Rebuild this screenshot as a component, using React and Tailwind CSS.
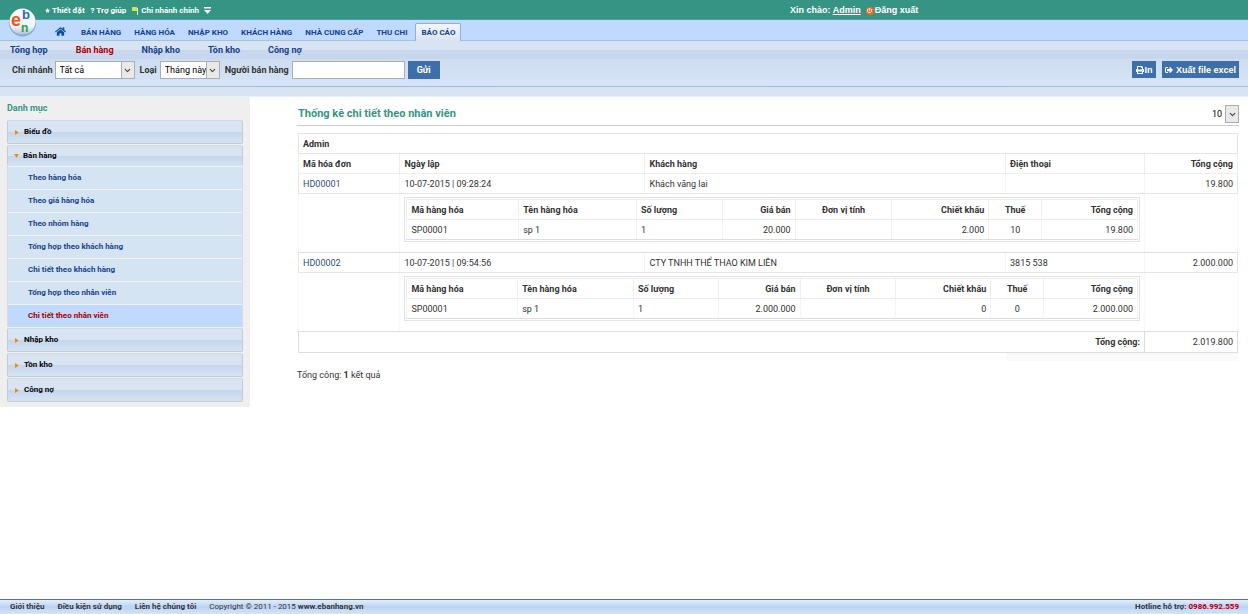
import React from 'react';
import { ChevronDown } from 'lucide-react';
import { FaHome, FaPrint, FaSignOutAlt, FaPowerOff } from 'react-icons/fa';

const mainNav = ['BÁN HÀNG', 'HÀNG HÓA', 'NHẬP KHO', 'KHÁCH HÀNG', 'NHÀ CUNG CẤP', 'THU CHI'];

const subNav = ['Tổng hợp', 'Bán hàng', 'Nhập kho', 'Tồn kho', 'Công nợ'];

const salesReports = [
  'Theo hàng hóa',
  'Theo giá hàng hóa',
  'Theo nhóm hàng',
  'Tổng hợp theo khách hàng',
  'Chi tiết theo khách hàng',
  'Tổng hợp theo nhân viên',
  'Chi tiết theo nhân viên',
];

const invoices = [
  {
    id: 'HD00001',
    date: '10-07-2015 | 09:28:24',
    customer: 'Khách vãng lai',
    phone: '',
    total: '19.800',
    cols: [112, 118, 86, 73, 97, 97, 53, 96],
    line: ['SP00001', 'sp 1', '1', '20.000', '', '2.000', '10', '19.800'],
  },
  {
    id: 'HD00002',
    date: '10-07-2015 | 09:54:56',
    customer: 'CTY TNHH THỂ THAO KIM LIÊN',
    phone: '3815 538',
    total: '2.000.000',
    cols: [111, 116, 85, 82, 96, 95, 53, 94],
    line: ['SP00001', 'sp 1', '1', '2.000.000', '', '0', '0', '2.000.000'],
  },
];

const lineHeads = [
  { label: 'Mã hàng hóa', align: 'text-left' },
  { label: 'Tên hàng hóa', align: 'text-left' },
  { label: 'Số lượng', align: 'text-left' },
  { label: 'Giá bán', align: 'text-right' },
  { label: 'Đơn vị tính', align: 'text-center' },
  { label: 'Chiết khấu', align: 'text-right' },
  { label: 'Thuế', align: 'text-center' },
  { label: 'Tổng cộng', align: 'text-right' },
];

const Logo = () => (
  <svg viewBox="0 0 30 30" className="h-[30px] w-[30px]">
    <defs>
      <linearGradient id="ball" x1="0" y1="0" x2="0" y2="1">
        <stop offset="0" stopColor="#ffffff" />
        <stop offset="0.7" stopColor="#eef4fa" />
        <stop offset="1" stopColor="#a9c0da" />
      </linearGradient>
    </defs>
    <circle cx="14.5" cy="15.8" r="13.6" fill="#6e8fae" opacity="0.6" />
    <circle cx="14.5" cy="14.6" r="13" fill="url(#ball)" />
    <g fontFamily="Liberation Sans, sans-serif" fontWeight="bold">
      <text x="3" y="19" fontSize="18" fill="#f0551c">e</text>
      <text x="14" y="12" fontSize="13" fill="#2a66c4">b</text>
      <text x="13" y="25" fontSize="12" fill="#2fa043">n</text>
    </g>
  </svg>
);

const Select = ({ id, label, value, className, border = 'border-[#abadb3]' }) => (
  <span className={`relative inline-flex h-[18px] ${className}`}>
    <select id={id} aria-label={label} className={`w-full appearance-none border bg-white pl-1 text-[9px] font-normal leading-4 text-black ${border}`}>
      <option>{value}</option>
    </select>
    <span className="pointer-events-none absolute inset-y-0 right-0 flex w-[14px] items-center justify-center border border-[#abadb3] bg-[#e9e9e9]">
      <ChevronDown size={9} strokeWidth={3} className="text-[#444]" />
    </span>
  </span>
);

const Header = () => (
  <header>
    {/* Top bar */}
    <div className="flex h-5 items-center border-b border-[#4b9c9b] bg-[#369485] pt-[2px] pl-[45px] text-[8px] font-bold text-white">
      <div className="flex w-[745px] gap-[6px]">
        <a href="#setup" className="flex items-center gap-[2px]">
          <svg viewBox="0 0 10 10" className="h-[5px] w-[5px]"><path d="M5 0l1.5 3.3 3.5.4-2.6 2.4.7 3.6L5 7.9 1.9 9.7l.7-3.6L0 3.7l3.5-.4z" fill="#fff" /></svg>
          Thiết đặt
        </a>
        <a href="#help">? Trợ giúp</a>
        <a href="#branch" className="flex items-center gap-[3px]">
          <svg viewBox="0 0 6 8" className="h-2 w-[6px]"><path d="M0 0h5v4H0z" fill="#d3e649" /><path d="M5 1h1v7H5z" fill="#e8f2c8" /></svg>
          Chi nhánh chính
          <svg viewBox="0 0 7 7" className="ml-[2px] h-[7px] w-[7px]"><path d="M0 0h7v1.5H0zM0 3h7L3.5 7z" fill="#fff" /></svg>
        </a>
      </div>
      <div className="flex items-center gap-[5px] font-['Liberation_Sans',Arial,sans-serif] text-[9px]">
        <span>Xin chào: <a href="#me" className="underline">Admin</a></span>
        <a href="#logout" className="flex items-center gap-px">
          <span className="flex h-2 w-2 items-center justify-center rounded-full bg-[#f26a1b]">
            <FaPowerOff size={5} />
          </span>
          Đăng xuất
        </a>
      </div>
    </div>

    {/* Main navigation */}
    <nav className="relative flex h-[21px] items-end border-b border-[#a3c2e4] bg-[#bfd9ff] pl-[55px] text-[8px] font-bold text-[#15428b]">
      <a href="#home" className="absolute -top-[13px] left-2" aria-label="ebanhang"><Logo /></a>
      <a href="#dashboard" className="mr-[15px] flex h-[17px] items-center" aria-label="Trang chủ">
        <FaHome size={11} className="text-[#0d4f9e]" />
      </a>
      <div className="flex gap-[13px]">
        {mainNav.map((item) => (
          <a key={item} href="#nav" className="leading-[14px]">{item}</a>
        ))}
      </div>
      <a href="#report" className="-mb-px ml-2 rounded-t-[2px] border border-b-0 border-[#8fb0dc] bg-gradient-to-b from-[#f3f6fb] to-[#d9e4f3] px-[5px] leading-[17px]">BÁO CÁO</a>
    </nav>

    {/* Sub navigation and filters */}
    <div className="border-b border-[#99bbe8] bg-gradient-to-b from-[#c7d7ed] to-[#d6e5f4]">
      <nav className="flex h-[18px] items-center gap-7 bg-gradient-to-b from-[#d9e4f3] from-50% to-[#c7d7ed] to-50% pt-px pl-[10px] text-[9px] font-bold text-[#15428b]">
        {subNav.map((item) => (
          <a key={item} href="#sub" className={item === 'Bán hàng' ? 'text-[#a40000]' : ''}>{item}</a>
        ))}
      </nav>
      <form className="flex h-[27px] items-start pt-[2px] pr-[9px] pl-3 text-[9px] font-bold leading-[18px] text-[#333]">
        <label htmlFor="branch" className="mr-[2px]">Chi nhánh</label>
        <Select id="branch" value="Tất cả" className="mr-[5px] w-20" />
        <label htmlFor="period" className="mr-[3px]">Loại</label>
        <Select id="period" value="Tháng này" className="mr-[5px] w-[60px]" />
        <label htmlFor="seller" className="mr-[3px]">Người bán hàng</label>
        <input id="seller" type="text" className="h-[18px] w-[113px] border border-[#abadb3] bg-white px-1 font-normal" />
        <button type="button" className="ml-[3px] h-[18px] w-8 bg-[#3f6fa9] text-white">Gửi</button>
        <div className="ml-auto flex gap-[6px] font-['Liberation_Sans',Arial,sans-serif] text-white">
          <button type="button" className="flex h-[17px] w-6 items-center justify-center gap-px bg-[#3f6fa9]"><FaPrint size={8} />In</button>
          <button type="button" className="flex h-[17px] w-[77px] items-center justify-center gap-[3px] whitespace-nowrap bg-[#3f6fa9]"><FaSignOutAlt size={8} />Xuất file excel</button>
        </div>
      </form>
    </div>
    <div className="h-[10px] border-b border-[#eaf0f9] bg-[#d9e4f3]" />
  </header>
);

const PanelHead = ({ label, open }) => (
  <button
    type="button"
    className={`flex w-full items-center gap-1 rounded-[2px] border border-[#c3ccd6] border-t-[#d3d9e0] bg-gradient-to-b from-[#d9e4f3] from-50% via-[#c5d6ec] via-50% to-[#d5e4f3] text-[8px] font-bold text-black ${
      open ? 'h-[21px] border-b-0 pl-[6px]' : 'h-6 pl-[7px]'
    }`}
  >
    <svg viewBox="0 0 4 4" className="h-[5px] w-[5px] shrink-0">
      <path d={open ? 'M0 0h4L2 3z' : 'M0 0l3 2-3 2z'} fill="#f08a00" />
    </svg>
    {label}
  </button>
);

const Sidebar = () => (
  <aside className="w-[250px] shrink-0 self-start bg-[#efefef] px-[7px] pt-[3px] pb-[5px]">
    <h2 className="h-5 text-[9px] font-bold leading-4 text-[#369485]">Danh mục</h2>
    <div className="flex flex-col gap-px">
      <PanelHead label="Biểu đồ" />
      <div>
        <PanelHead label="Bán hàng" open />
        <ul className="border-x border-[#d5dbe2]">
          {salesReports.map((item) => (
            <li
              key={item}
              className={`h-[23px] border-t border-[#eef3f8] pl-5 text-[8px] font-bold leading-[22px] ${
                item === 'Chi tiết theo nhân viên' ? 'bg-[#bfd9ff] text-[#a40000]' : 'bg-[#d5e4f3] text-[#15428b]'
              }`}
            >
              <a href="#item">{item}</a>
            </li>
          ))}
        </ul>
      </div>
      <PanelHead label="Nhập kho" />
      <PanelHead label="Tồn kho" />
      <PanelHead label="Công nợ" />
    </div>
  </aside>
);

const LineTable = ({ cols, line }) => (
  <div className="border border-[#e3e3e3] p-px">
    <table className="w-full table-fixed border-collapse">
      <colgroup>
        {cols.map((w, i) => (
          <col key={i} style={{ width: `${(w / 732) * 100}%` }} />
        ))}
      </colgroup>
      <thead>
        <tr className="h-5">
          {lineHeads.map((h) => (
            <th key={h.label} className={`border border-[#eeeeee] px-1 ${h.align}`}>{h.label}</th>
          ))}
        </tr>
      </thead>
      <tbody>
        <tr className="h-5">
          {line.map((v, i) => (
            <td key={i} className={`border border-[#f3f3f3] border-b-[#dddddd] px-1 ${lineHeads[i].align}`}>{v}</td>
          ))}
        </tr>
      </tbody>
    </table>
  </div>
);

const Report = () => (
  <main className="min-w-0 flex-1 pt-2 pr-[9px] pl-[47px] text-[9px] text-[#333]">
    <div className="flex h-[21px] items-start justify-between border-b border-[#cccccc]">
      <h1 className="pl-px text-[11px] font-bold leading-[18px] text-[#369485]">Thống kê chi tiết theo nhân viên</h1>
      <Select id="size" label="Số dòng" value="10" className="w-8" border="border-transparent" />
    </div>

    <div className="mt-[7px] px-px">
      <table className="w-full table-fixed border-collapse leading-3">
        <colgroup>
          <col className="w-[10.8%]" />
          <col className="w-[26.1%]" />
          <col className="w-[38.4%]" />
          <col className="w-[14.8%]" />
          <col className="w-[9.9%]" />
        </colgroup>
        <thead>
          <tr className="h-5">
            <th colSpan={5} className="border border-[#e3e3e3] px-1 text-left">Admin</th>
          </tr>
          <tr className="h-5 text-left">
            <th className="border border-[#eeeeee] px-1">Mã hóa đơn</th>
            <th className="border border-[#eeeeee] px-1">Ngày lập</th>
            <th className="border border-[#eeeeee] px-1">Khách hàng</th>
            <th className="border border-[#eeeeee] px-1">Điện thoại</th>
            <th className="border border-[#eeeeee] px-1 text-right">Tổng cộng</th>
          </tr>
        </thead>
        <tbody>
          {invoices.map((inv) => (
            <React.Fragment key={inv.id}>
              <tr className="h-5">
                <td className="border border-[#e6e6e6] border-r-[#f3f3f3] px-1"><a href="#invoice" className="text-[#2f4f73]">{inv.id}</a></td>
                <td className="border-y border-[#e6e6e6] px-1">{inv.date}</td>
                <td className="border border-x-[#f3f3f3] border-y-[#e6e6e6] px-1">{inv.customer}</td>
                <td className="border border-x-[#f3f3f3] border-y-[#e6e6e6] px-1">{inv.phone}</td>
                <td className="border border-[#e6e6e6] border-l-[#f3f3f3] px-1 text-right">{inv.total}</td>
              </tr>
              <tr>
                <td className="border border-x-[#f8f8f8] border-y-[#dddddd]" />
                <td colSpan={3} className="border border-x-[#f8f8f8] border-y-[#dddddd] px-1 pt-[3px] pb-[10px]">
                  <LineTable cols={inv.cols} line={inv.line} />
                </td>
                <td className="border border-x-[#f8f8f8] border-y-[#dddddd]" />
              </tr>
            </React.Fragment>
          ))}
        </tbody>
        <tfoot>
          <tr className="h-[21px]">
            <td colSpan={4} className="border border-[#dddddd] px-1 text-right font-bold">Tổng cộng:</td>
            <td className="border border-[#dddddd] px-1 text-right">2.019.800</td>
          </tr>
          <tr className="h-2">
            <td colSpan={3} />
            <td colSpan={2} className="bg-[#fafafa]" />
          </tr>
        </tfoot>
      </table>
    </div>
    <p className="mt-2 leading-3">Tổng công: <b>1</b> kết quả</p>
  </main>
);

const Footer = () => (
  <footer className="mt-auto flex h-[15px] items-center border-t border-[#4a74b0] bg-gradient-to-b from-[#e2edfb] via-[#b9d3f5] to-[#d5e4f7] pr-[9px] pl-[10px] text-[8px] text-[#333]">
    <div className="flex gap-[13px]">
      <a href="#about" className="font-bold">Giới thiệu</a>
      <a href="#terms" className="font-bold">Điều kiện sử dụng</a>
      <a href="#contact" className="font-bold">Liên hệ chúng tôi</a>
      <span>Copyright © 2011 - 2015 <b>www.ebanhang.vn</b></span>
    </div>
    <p className="ml-auto font-bold">Hotline hỗ trợ: <span className="text-[#a40000]">0986.992.559</span></p>
  </footer>
);

const App = () => (
  <div className="flex min-h-screen flex-col bg-white font-[Roboto,'Liberation_Sans',Arial,sans-serif]">
    <Header />
    <div className="flex">
      <Sidebar />
      <Report />
    </div>
    <Footer />
  </div>
);

export default App;
